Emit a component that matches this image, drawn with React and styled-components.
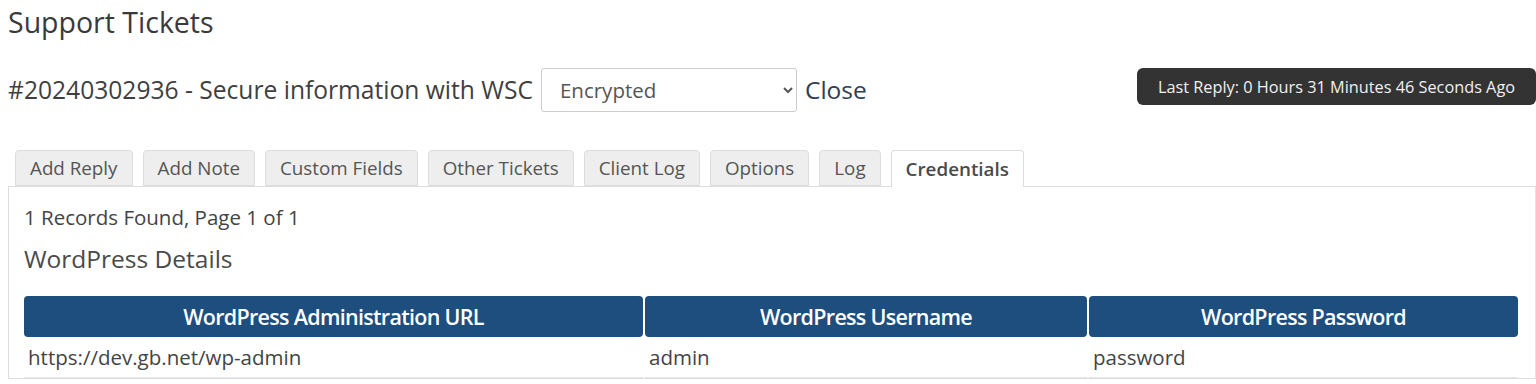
import styled, { createGlobalStyle } from "styled-components";

const tabs = [
  "Add Reply",
  "Add Note",
  "Custom Fields",
  "Other Tickets",
  "Client Log",
  "Options",
  "Log",
  "Credentials",
];

const columns = [
  { label: "WordPress Administration URL", width: 619 },
  { label: "WordPress Username", width: 442 },
  { label: "WordPress Password", width: 429 },
];

function App() {
  return (
    <Page>
      <GlobalStyle />
      <Title>Support Tickets</Title>
      <TicketRow>
        <TicketHeading>#20240302936 - Secure information with WSC</TicketHeading>
        <StatusSelect defaultValue="Encrypted">
          <option>Encrypted</option>
          <option>Open</option>
          <option>Closed</option>
        </StatusSelect>
        <CloseLink href="#">Close</CloseLink>
        <LastReply>Last Reply: 0 Hours 31 Minutes 46 Seconds Ago</LastReply>
      </TicketRow>
      <TabBar>
        {tabs.map((t) => (
          <Tab key={t} $active={t === "Credentials"}>
            {t}
          </Tab>
        ))}
      </TabBar>
      <Panel>
        <Records>1 Records Found, Page 1 of 1</Records>
        <SubTitle>WordPress Details</SubTitle>
        <Table>
          <colgroup>
            {columns.map((c) => (
              <col key={c.label} style={{ width: c.width }} />
            ))}
          </colgroup>
          <thead>
            <tr>
              {columns.map((c) => (
                <Th key={c.label}>{c.label}</Th>
              ))}
            </tr>
          </thead>
          <tbody>
            <tr>
              <Td>https://dev.gb.net/wp-admin</Td>
              <Td>admin</Td>
              <Td>password</Td>
            </tr>
          </tbody>
        </Table>
      </Panel>
    </Page>
  );
}

const GlobalStyle = createGlobalStyle`
  body {
    margin: 0;
    background: #fff;
    font-family: "Open Sans", "Noto Sans", sans-serif;
    color: #333;
  }
`;

const Page = styled.div`
  padding: 0 0 0 8px;
`;

const Title = styled.h1`
  margin: 0;
  padding-top: 4px;
  font-size: 28.5px;
  font-weight: 400;
  line-height: 36px;
  color: #3a3a3a;
`;

const TicketRow = styled.div`
  display: flex;
  align-items: center;
  margin-top: 28px;
  height: 43px;
`;

const TicketHeading = styled.h2`
  margin: 0;
  font-size: 24.6px;
  font-weight: 400;
  color: #3f3f3f;
  white-space: nowrap;
`;

const StatusSelect = styled.select`
  margin-left: 8px;
  width: 256px;
  height: 44px;
  padding: 0 14px;
  border: 1px solid #ccc;
  border-radius: 3px;
  background: #fff;
  font-family: "Open Sans", sans-serif;
  font-size: 20.5px;
  color: #555;
`;

const CloseLink = styled.a`
  margin-left: 8px;
  font-size: 24.5px;
  color: #2f3e52;
  text-decoration: none;
`;

const LastReply = styled.div`
  margin-left: auto;
  align-self: flex-start;
  height: 37px;
  width: 399px;
  box-sizing: border-box;
  display: flex;
  align-items: center;
  justify-content: center;
  background: #333;
  border-radius: 6px;
  color: #f0f0f0;
  font-size: 16.3px;
  white-space: nowrap;
`;

const TabBar = styled.div`
  display: flex;
  gap: 10px;
  margin-top: 39px;
  padding-left: 7px;
  height: 37px;
  position: relative;
  z-index: 1;
`;

const Tab = styled.div`
  height: ${(p) => (p.$active ? "37px" : "36px")};
  box-sizing: border-box;
  padding: 0 14px;
  display: flex;
  align-items: center;
  border: 1px solid #ddd;
  border-bottom: ${(p) => (p.$active ? "none" : "1px solid #ddd")};
  border-radius: 4px 4px 0 0;
  background: ${(p) => (p.$active ? "#fff" : "#eee")};
  color: ${(p) => (p.$active ? "#4a4a4a" : "#555")};
  font-size: 18.8px;
  font-weight: ${(p) => (p.$active ? 600 : 400)};
  white-space: nowrap;
`;

const Panel = styled.div`
  margin-top: -1px;
  border: 1px solid #ddd;
  border-right-color: #e4e4e4;
  width: 1528px;
  box-sizing: border-box;
  padding: 15px 15px 0 15px;
`;

const Records = styled.div`
  font-size: 20.5px;
  line-height: 30px;
  color: #444;
`;

const SubTitle = styled.h3`
  margin: 12px 0 0;
  font-size: 24.5px;
  font-weight: 400;
  line-height: 30px;
  color: #4a4a4a;
`;

const Table = styled.table`
  margin-top: 22px;
  margin-left: -2px;
  width: 1498px;
  border-collapse: separate;
  border-spacing: 2px 0;
  table-layout: fixed;
`;

const Th = styled.th`
  height: 41px;
  padding: 0;
  background: #1d4e7e;
  color: #fff;
  border-radius: 4px;
  font-size: 21.5px;
  font-weight: 600;
  letter-spacing: -0.7px;
  text-align: center;
`;

const Td = styled.td`
  height: 40px;
  padding: 0 4px;
  border-bottom: 1px solid #e6e6e6;
  font-size: 20.5px;
  color: #444;
`;

export default App;
